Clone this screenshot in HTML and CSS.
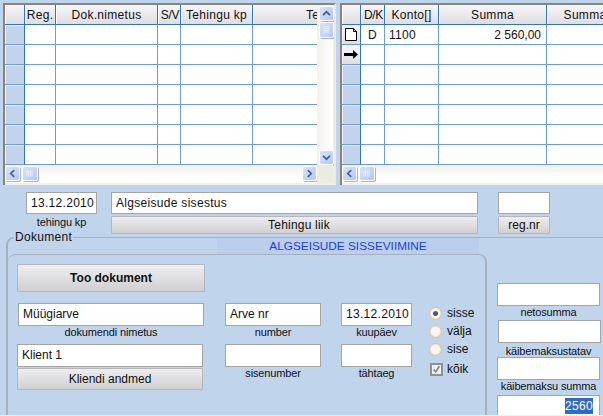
FILE: index.html
```html
<!DOCTYPE html>
<html lang="et">
<head>
<meta charset="utf-8">
<title>Algseisude sisestus</title>
<link rel="stylesheet" href="styles.css">
</head>
<body>
<div class="app">
  <div class="grids">
    <section class="panel panel-left">
      <div class="sheet cols-left">
        <div class="hd"></div><div class="hd">Reg.</div><div class="hd">Dok.nimetus</div><div class="hd tight">S/V</div><div class="hd">Tehingu kp</div><div class="hd">Tehingu liik</div>
        <div class="rh"></div><div></div><div></div><div></div><div></div><div></div>
        <div class="rh"></div><div></div><div></div><div></div><div></div><div></div>
        <div class="rh"></div><div></div><div></div><div></div><div></div><div></div>
        <div class="rh"></div><div></div><div></div><div></div><div></div><div></div>
        <div class="rh"></div><div></div><div></div><div></div><div></div><div></div>
        <div class="rh"></div><div></div><div></div><div></div><div></div><div></div>
        <div class="rh"></div><div></div><div></div><div></div><div></div><div></div>
      </div>
      <div class="vbar">
        <span class="sb"><svg viewBox="0 0 15 15"><path d="M3.5 9.5 7.5 5.5 11.5 9.5" class="chev"/></svg></span>
        <span class="sb thumb-v"><svg viewBox="0 0 15 15"><path d="M4 4.5H11M4 6.5H11M4 8.5H11M4 10.5H11" class="grip"/></svg></span>
        <span class="fill"></span>
        <span class="sb"><svg viewBox="0 0 15 15"><path d="M3.5 5.5 7.5 9.5 11.5 5.5" class="chev"/></svg></span>
      </div>
      <div class="hbar">
        <span class="sb"><svg viewBox="0 0 15 15"><path d="M9.5 3.5 5.5 7.5 9.5 11.5" class="chev"/></svg></span>
        <span class="sb thumb-h"><svg viewBox="0 0 15 15"><path d="M4.5 4V11M6.5 4V11M8.5 4V11M10.5 4V11" class="grip"/></svg></span>
        <span class="fill"></span>
        <span class="sb"><svg viewBox="0 0 15 15"><path d="M5.5 3.5 9.5 7.5 5.5 11.5" class="chev"/></svg></span>
      </div>
      <div class="corner"></div>
    </section>
    <section class="panel panel-right">
      <div class="sheet cols-right">
        <div class="hd"></div><div class="hd tight">D/K</div><div class="hd">Konto[]</div><div class="hd">Summa</div><div class="hd">Summa</div>
        <div class="rh rh-on"><svg width="14" height="15" viewBox="0 0 14 15"><path d="M1.5 1.5H9.5L12.5 4.5V13.5H1.5ZM9.5 1.5V4.5H12.5" class="doc"/></svg></div><div class="ctr">D</div><div class="txt">1100</div><div class="num">2 560,00</div><div></div>
        <div class="rh rh-on"><svg width="14" height="11" viewBox="0 0 14 11"><path d="M0 4H9V1L14 5.5 9 10V7H0Z"/></svg></div><div></div><div></div><div></div><div></div>
        <div class="rh"></div><div></div><div></div><div></div><div></div>
        <div class="rh"></div><div></div><div></div><div></div><div></div>
        <div class="rh"></div><div></div><div></div><div></div><div></div>
        <div class="rh"></div><div></div><div></div><div></div><div></div>
        <div class="rh"></div><div></div><div></div><div></div><div></div>
      </div>
      <div class="hbar">
        <span class="sb"><svg viewBox="0 0 15 15"><path d="M9.5 3.5 5.5 7.5 9.5 11.5" class="chev"/></svg></span>
        <span class="sb thumb-h"><svg viewBox="0 0 15 15"><path d="M4.5 4V11M6.5 4V11M8.5 4V11M10.5 4V11" class="grip"/></svg></span>
        <span class="fill"></span>
      </div>
    </section>
  </div>

  <div class="top-form">
    <div class="stack w-date">
      <div class="input">13.12.2010</div>
      <div class="cap">tehingu kp</div>
    </div>
    <div class="stack w-type">
      <div class="input">Algseisude sisestus</div>
      <div class="btn btn-small btn-type">Tehingu liik</div>
    </div>
    <div class="stack w-reg">
      <div class="input"></div>
      <div class="btn btn-small">reg.nr</div>
    </div>
  </div>

  <fieldset class="doc-set">
    <legend>Dokument</legend>
    <div class="banner">ALGSEISUDE SISSEVIIMINE</div>
    <div class="doc-body">
      <div class="inner">
        <div class="btn btn-big">Too dokument</div>
        <div class="fields">
          <div class="col col-name">
            <div class="tall nudge">Müügiarve</div>
            <div class="cap">dokumendi nimetus</div>
            <div class="tall">Klient 1</div>
            <div class="btn btn-client">Kliendi andmed</div>
          </div>
          <div class="col col-num">
            <div class="tall">Arve nr</div>
            <div class="cap">number</div>
            <div class="tall"></div>
            <div class="cap">sisenumber</div>
          </div>
          <div class="col col-date">
            <div class="tall spaced">13.12.2010</div>
            <div class="cap">kuupäev</div>
            <div class="tall"></div>
            <div class="cap">tähtaeg</div>
          </div>
          <div class="col col-opts">
            <div class="opt"><span class="radio on"></span>sisse</div>
            <div class="opt"><span class="radio"></span>välja</div>
            <div class="opt"><span class="radio"></span>sise</div>
            <div class="opt opt-check"><span class="check"><svg width="11" height="11" viewBox="0 0 11 11"><path d="M2 5.5 4.5 8.5 9 1.5" class="tick"/></svg></span>kõik</div>
          </div>
        </div>
      </div>
      <div class="sums">
        <div class="tall"></div>
        <div class="cap">netosumma</div>
        <div class="tall nudge"></div>
        <div class="cap cap-low">käibemaksustatav</div>
        <div class="tall"></div>
        <div class="cap">käibemaksu summa</div>
        <div class="tall right total"><span class="sel">2560</span></div>
      </div>
    </div>
  </fieldset>
</div>
</body>
</html>
```
FILE: styles.css
```css
* { box-sizing: border-box; }
html, body { margin: 0; padding: 0; }
body { background: #c0d4ec; font: 12px/14px "Liberation Sans", Arial, sans-serif; color: #111; letter-spacing: .3px; }
.app { width: 603px; height: 416px; overflow: hidden; border-bottom: 1px solid #f1f0e8; }

.grids { display: flex; gap: 4px; padding-top: 3px; height: 185px; }
.panel { display: grid; grid-template-rows: 160px 18px; height: 182px; background: #f1efe6; border-top: 2px solid #85857c; border-left: 2px solid #85857c; overflow: hidden; }
.panel-left { width: 333px; margin-left: 3px; grid-template-columns: 312px 16px; border-right: 2px solid #ecebe2; }
.panel-right { width: 263px; grid-template-columns: 261px; }

.sheet { display: grid; grid-auto-rows: 20px; grid-template-rows: 20px; background: #fff; overflow: hidden; align-content: start; }
.cols-left { grid-template-columns: 20px 31px 102px 23px 72px 170px; width: 312px; }
.cols-right { grid-template-columns: 19px 24px 54px 108px 77px; width: 261px; }
.sheet > div { border-right: 1px solid #6b9cdc; border-bottom: 1px solid #6b9cdc; min-width: 0; white-space: nowrap; padding: 3px 2px 0; }
.sheet > .hd { background: linear-gradient(#f6f6f8, #dedee2); border-right: 1px solid #2f74bd; border-bottom: 1px solid #2f74bd; text-align: center; padding: 3px 0 0; box-shadow: inset 1px 0 #fff; overflow: hidden; }
.sheet > .tight { letter-spacing: -.3px; padding-left: 2px; }
.sheet > .rh { background: #c3d3ec; border-right: 1px solid #2f74bd; box-shadow: inset 1px 1px #eef2fa; padding: 0; display: flex; align-items: center; justify-content: center; }
.sheet > .rh-on { background: linear-gradient(#f6f6f8, #dedee2); }
.sheet > .ctr { text-align: center; }
.sheet > .txt { padding-left: 4px; }
.sheet > .num { text-align: right; padding-right: 5px; letter-spacing: 0; }

.vbar { display: flex; flex-direction: column; gap: 1px; padding: 1px 0 0 2px; background: linear-gradient(90deg, #f3f1ea, #fff); height: 160px; }
.hbar { display: flex; gap: 2px; padding: 1px 0 1px 0; background: linear-gradient(#f3f1ea, #fff 85%); border-bottom: 1px solid #fff; }
.corner { background: #ecebe2; }
.fill { flex: 1; }
.sb { display: block; width: 15px; height: 15px; flex: none; border: 1px solid #fff; border-radius: 2px; background: linear-gradient(135deg, #d8e3fc, #b4c8f6); box-shadow: 1px 1px 0 #9fb2dc; }
.sb svg { display: block; width: 13px; height: 13px; }
.thumb-v { height: 16px; }
.thumb-h { width: 16px; }
.chev { fill: none; stroke: #4d6185; stroke-width: 2; }
.grip { fill: none; stroke: #eef3ff; stroke-width: 1; }
.doc { fill: #fff; stroke: #000; stroke-width: 1; }
.tick { fill: none; stroke: #7d8a8a; stroke-width: 2; }

.top-form { display: flex; padding: 7px 0 0 26px; }
.stack { display: flex; flex-direction: column; }
.w-date { width: 71px; margin-right: 14px; }
.w-type { width: 367px; margin-right: 20px; }
.w-reg { width: 52px; }
.input, .tall { background: #fff; border: 1px solid #a5a5a5; padding: 3px 4px 0; white-space: nowrap; overflow: hidden; }
.input { height: 22px; }
.tall { height: 23px; letter-spacing: 0; }
.tall.spaced { letter-spacing: .3px; }
.cap { text-align: center; white-space: nowrap; height: 18px; padding-top: 2px; font-size: 11px; line-height: 12px; letter-spacing: -.15px; }
.fields .cap { padding-top: 0; }
.btn { display: flex; align-items: center; justify-content: center; background: linear-gradient(#eeedf0, #d0d0d2); border: 1px solid #b4b6ba; border-radius: 1px; letter-spacing: 0; }
.btn-small { height: 18px; margin-top: 2px; }
.btn-type { padding-left: 9px; letter-spacing: .2px; }
.btn-big { width: 188px; height: 28px; font-weight: bold; }
.btn-client { height: 22px; margin-top: 1px; }

.doc-set { margin: -4px 0 0 6px; padding: 0; height: 200px; border: 0; border-top: 1px solid #a8b0bd; border-left: 2px solid #a8b0bd; border-top-left-radius: 8px; min-width: 0; }
legend { margin-left: 6px; padding: 0 1px; line-height: 14px; }
.banner { width: 262px; margin: -6px 0 0 209px; height: 16px; background: #bbceeb; color: #1a3fd8; text-align: center; padding-top: 1px; letter-spacing: 0; font-size: 11.8px; }
.doc-body { display: flex; }
.inner { width: 479px; flex: none; height: 170px; border-top: 1px solid #a8b0bd; border-right: 2px solid #a8b0bd; border-top-right-radius: 8px; border-top-left-radius: 8px; padding: 9px 0 0 9px; }
.fields { display: flex; gap: 20px; padding-top: 11px; }
.col { display: flex; flex-direction: column; }
.col-name { width: 188px; }
.col-name .tall, .col-name .btn { width: 186px; }
.col-num { width: 96px; }
.col-date { width: 71px; }
.col-opts { margin-left: -3px; padding-top: 1px; }
.nudge { position: relative; left: 1px; }
.opt { display: flex; align-items: center; gap: 5px; height: 18px; letter-spacing: 0; }
.opt-check { margin-top: 1px; height: 20px; gap: 4px; padding-left: 1px; }
.radio { width: 13px; height: 13px; border-radius: 50%; background: #fbf7f2; border: 1px solid #dcbea6; box-shadow: inset 0 0 0 1px #f5e4d4; display: flex; align-items: center; justify-content: center; }
.radio.on::before { content: ""; width: 5px; height: 5px; border-radius: 50%; background: #3c5a8c; }
.check { width: 13px; height: 13px; border: 2px solid #8d9194; background: #eeeeea; display: flex; align-items: center; justify-content: center; }
.check svg { flex: none; width: 9px; height: 9px; }

.sums { width: 105px; margin-left: 10px; padding-top: 29px; display: flex; flex-direction: column; }
.sums .tall { width: 103px; flex: none; }
.sums .cap { height: 14px; padding-top: 0; width: 103px; }
.sums .cap-low { padding-top: 2px; }
.right { text-align: right; }
.total { margin-top: 1px; padding-right: 6px; padding-top: 2px; }
.sel { display: inline-block; background: #316ac5; color: #fff; letter-spacing: .3px; padding: 1px 0; }
```
